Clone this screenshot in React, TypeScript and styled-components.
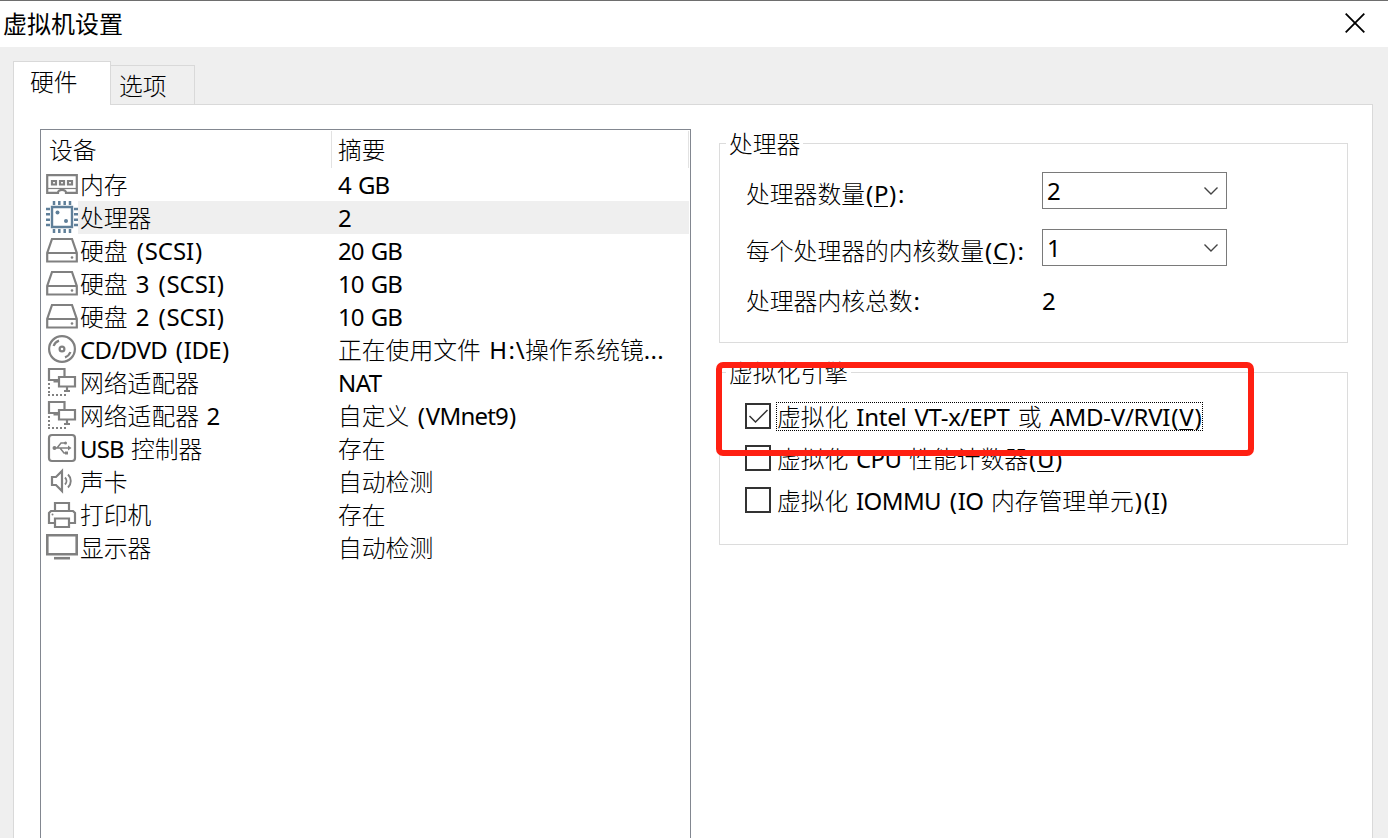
import React from "react";
import styled, { createGlobalStyle } from "styled-components";

const GlobalStyle = createGlobalStyle`
  *, *::before, *::after { box-sizing: border-box; }
  body { margin: 0; overflow: hidden; }
`;

const Dialog = styled.div`
  position: relative;
  display: flex;
  flex-direction: column;
  width: 1388px;
  height: 838px;
  overflow: hidden;
  background: #efefef;
  border-top: 1px solid #6e6e6e;
  color: #000;
  font: 24px/33px "Noto Sans", "Noto Sans CJK SC", sans-serif;
`;

const TitleBar = styled.header`
  display: flex;
  justify-content: space-between;
  align-items: center;
  flex: none;
  height: 46px;
  padding: 0 23px 2px 3px;
  background: #fff;
`;

const Title = styled.h1`
  margin: 0;
  padding-bottom: 1px;
  font: 400 24px/43px "Noto Sans CJK SC", sans-serif;
`;

const CloseButton = styled.button`
  display: flex;
  padding: 0;
  border: 0;
  background: none;
`;

const Tabs = styled.nav`
  position: relative;
  z-index: 1;
  display: flex;
  align-items: flex-end;
  flex: none;
  height: 57px;
  padding-left: 13px;
`;

const Tab = styled.button<{ $active?: boolean }>`
  display: flex;
  align-items: flex-start;
  flex: none;
  width: ${(p) => (p.$active ? 98 : 84)}px;
  height: ${(p) => (p.$active ? 44 : 39)}px;
  margin-bottom: ${(p) => (p.$active ? -1 : 0)}px;
  padding: ${(p) => (p.$active ? "3px 0 0 16px" : "3px 0 0 8px")};
  border: 1px solid #d9d9d9;
  border-bottom: 0;
  border-left-width: ${(p) => (p.$active ? 1 : 0)}px;
  background: ${(p) => (p.$active ? "#fff" : "#efefef")};
  color: inherit;
  font: inherit;
  text-align: left;
`;

const Panel = styled.main`
  display: flex;
  align-items: flex-start;
  gap: 28px;
  width: 1360px;
  height: 740px;
  margin-left: 13px;
  padding: 24px 24px 0 26px;
  background: #fff;
  border: 1px solid #d9d9d9;
`;

const DeviceList = styled.section`
  flex: none;
  width: 651px;
  height: 720px;
  border: 1px solid #828790;
  padding: 1px 1px 0 0;
`;

const ListHeader = styled.div`
  display: grid;
  grid-template-columns: 291px 1fr;
  height: 37px;
`;

const HeaderCell = styled.div<{ $indent: number }>`
  padding: 2px 0 0 ${(p) => p.$indent}px;
  border-right: 1px solid #e2e2e2;
`;

const DeviceRow = styled.div`
  display: grid;
  grid-template-columns: 32px 260px 1fr;
  height: 33px;
  padding-left: 5px;
`;

const Cell = styled.div<{ $selected?: boolean; $pad?: number }>`
  padding-left: ${(p) => p.$pad ?? 0}px;
  background: ${(p) => (p.$selected ? "#efefef" : "transparent")};
  white-space: nowrap;
`;

const Icon = styled.svg`
  display: block;
  width: 32px;
  height: 33px;
  fill: none;
  stroke: #808080;
  stroke-width: 2.2;
`;

const Latin = styled.span<{ $track: number }>`
  letter-spacing: ${(p) => p.$track}px;
  word-spacing: 2px;
  white-space: pre;
`;

const Punctuation = styled.span`
  padding-left: 1px;
  letter-spacing: 0.8px;
`;

const Cjk = styled.span`
  font-family: "Noto Sans CJK SC", sans-serif;
  font-size: 23.8px;
  font-weight: 300;
  line-height: 1;
`;

const Mnemonic = styled.u`
  text-decoration-thickness: 1px;
  text-underline-offset: 3px;
`;

const Settings = styled.div`
  display: flex;
  flex-direction: column;
  gap: 29px;
  width: 629px;
  padding-top: 14px;
`;

const Group = styled.section<{ $height: number }>`
  height: ${(p) => p.$height}px;
  padding-left: 6px;
  border: 1px solid #dcdcdc;
`;

const Legend = styled.h2`
  width: max-content;
  height: 33px;
  margin: -17px 0 0;
  padding: 0 3px;
  background: #fff;
  font: inherit;
`;

const Field = styled.div<{ $top: number }>`
  display: grid;
  grid-template-columns: 296px 185px;
  align-items: center;
  height: 37px;
  margin: ${(p) => p.$top}px 0 0 20px;
  white-space: nowrap;
`;

const FieldLabel = styled.label`
  padding-top: 7px;
`;

const Select = styled.button`
  display: flex;
  align-items: center;
  justify-content: space-between;
  width: 185px;
  height: 37px;
  padding: 0 8px 0 4px;
  border: 1px solid #7a7a7a;
  background: #fff;
  color: inherit;
  font: inherit;
`;

const Total = styled.output`
  padding: 7px 0 0;
`;

const Options = styled.div`
  display: flex;
  flex-direction: column;
  gap: 12px;
  padding: 12px 0 0 19px;
`;

const Option = styled.label`
  display: flex;
  align-items: center;
  gap: 5px;
  height: 30px;
`;

const Box = styled.span`
  display: flex;
  flex: none;
  width: 26px;
  height: 26px;
  border: 2px solid #333;
  background: #fff;
`;

const OptionText = styled.span<{ $focused?: boolean }>`
  height: 29px;
  margin-top: 1px;
  line-height: 28px;
  border: 1px dotted ${(p) => (p.$focused ? "#000" : "transparent")};
  white-space: nowrap;
`;

const Highlight = styled.div`
  position: absolute;
  left: 716px;
  top: 361px;
  width: 538px;
  height: 94px;
  border: 6px solid #ff2012;
  border-radius: 7px;
  pointer-events: none;
`;

/* Splits a label into Chinese, Latin and punctuation runs, and underlines the letter after "&". */
function Label({ text, track = -0.6 }: { text: string; track?: number }) {
  const runs = text.match(/[\u4e00-\u9fff]+|&[A-Z]|[():]|[^\u4e00-\u9fff&():]+/g) ?? [];
  return (
    <>
      {runs.map((run, i) => {
        if (/[\u4e00-\u9fff]/.test(run)) return <Cjk key={i}>{run}</Cjk>;
        if (/[():]/.test(run)) return <Punctuation key={i}>{run}</Punctuation>;
        return (
          <Latin key={i} $track={track}>
            {run[0] === "&" ? <Mnemonic>{run[1]}</Mnemonic> : run}
          </Latin>
        );
      })}
    </>
  );
}

const MemoryIcon = () => (
  <Icon viewBox="0 0 32 33">
    <path d="M1.200 7.200h29.600v17.600H20a4 3 0 0 0-8 0H1.200z" />
    <path d="M1 20.500h30" strokeWidth="1.200" />
    <path d="M6 13h4v3.500H6zM14 13h4v3.500h-4zM22 13h4v3.500h-4z" />
  </Icon>
);

const CpuIcon = () => (
  <Icon viewBox="0 0 32 33">
    <g stroke="#5f7f99">
      <path d="M6 6h20v20H6z" strokeWidth="2.400" />
      <path d="M8 0v4M13.300 0v4M18.700 0v4M24 0v4M8 28v4M13.300 28v4M18.700 28v4M24 28v4M0 8h4M0 13.300h4M0 18.700h4M0 24h4M28 8h4M28 13.300h4M28 18.700h4M28 24h4" strokeWidth="2.500" />
      <circle cx="11.500" cy="11.500" r="2" fill="#5f7f99" stroke="none" />
      <circle cx="20" cy="20" r="2" fill="#5f7f99" stroke="none" />
    </g>
  </Icon>
);

const DiskIcon = () => (
  <Icon viewBox="0 0 32 33">
    <path d="M6 5h20l4.800 14v8.500H1.200V19zM1 19h30" />
    <circle cx="26" cy="23.500" r="1.300" fill="#808080" stroke="none" />
  </Icon>
);

const DiscIcon = () => (
  <Icon viewBox="0 0 32 33">
    <circle cx="16" cy="16" r="12.900" />
    <circle cx="16" cy="16" r="2.400" />
    <path d="M7.600 13a9 9 0 0 1 5.400-5.400M24.400 19a9 9 0 0 1-5.400 5.400" />
  </Icon>
);

const NetworkIcon = () => (
  <Icon viewBox="0 0 32 33">
    <path d="M12 14H3V3h15.500v7M7.500 15.500H12" />
    <path d="M13 11h16v9.500H13zM21 20.500v4M18 25h6" />
    <path d="M3 17v12M2 29h18" strokeWidth="2" strokeDasharray="2 2" />
  </Icon>
);

const UsbIcon = () => (
  <Icon viewBox="0 0 32 33">
    <rect x="3" y="3" width="26" height="26" rx="3" />
    <path d="M8 16h15M11 16l4-5h4M14 16l4 5h3" strokeWidth="1.500" />
    <g fill="#808080" stroke="none">
      <circle cx="8.500" cy="16" r="2" />
      <path d="M22 13.500l3.500 2.500-3.500 2.500z" />
      <circle cx="19.500" cy="11" r="1.500" />
      <path d="M19 19.500h3v3h-3z" />
    </g>
  </Icon>
);

const SoundIcon = () => (
  <Icon viewBox="0 0 32 33">
    <path d="M6 12h4l6-6v20l-6-6H6z" />
    <path d="M19 12.500a5 5 0 0 1 0 7M22 9.500a9 9 0 0 1 0 13" strokeWidth="1.900" />
  </Icon>
);

const PrinterIcon = () => (
  <Icon viewBox="0 0 32 33">
    <path d="M9 13V5h14v8M8 25H3V15l2-2h22l2 2v10h-5" />
    <path d="M9 20.500h14V29H9z" />
    <circle cx="6.500" cy="16.500" r="1" fill="#808080" stroke="none" />
  </Icon>
);

const MonitorIcon = () => (
  <Icon viewBox="0 0 32 33">
    <path d="M1.300 4.300h29.400v18.900H1.300z" strokeWidth="2.600" />
    <path d="M8 27.200h16" strokeWidth="2.600" />
  </Icon>
);

const devices = [
  { icon: MemoryIcon, name: "内存", summary: "4 GB", summaryTrack: -1 },
  { icon: CpuIcon, name: "处理器", summary: "2", selected: true },
  { icon: DiskIcon, name: "硬盘 (SCSI)", nameTrack: -0.1, summary: "20 GB", summaryTrack: -1 },
  { icon: DiskIcon, name: "硬盘 3 (SCSI)", nameTrack: -0.1, summary: "10 GB", summaryTrack: -1 },
  { icon: DiskIcon, name: "硬盘 2 (SCSI)", nameTrack: -0.1, summary: "10 GB", summaryTrack: -1 },
  { icon: DiscIcon, name: "CD/DVD (IDE)", nameTrack: -0.6, summary: "正在使用文件 H:\\操作系统镜...", summaryTrack: 0.3 },
  { icon: NetworkIcon, name: "网络适配器", summary: "NAT" },
  { icon: NetworkIcon, name: "网络适配器 2", summary: "自定义 (VMnet9)", summaryTrack: -0.8 },
  { icon: UsbIcon, name: "USB 控制器", nameTrack: -0.9, summary: "存在" },
  { icon: SoundIcon, name: "声卡", summary: "自动检测" },
  { icon: PrinterIcon, name: "打印机", summary: "存在" },
  { icon: MonitorIcon, name: "显示器", summary: "自动检测" },
];

const Chevron = () => (
  <svg width="14" height="9" viewBox="0 0 14 9" fill="none" stroke="#444" strokeWidth="1.400">
    <path d="M.5 1.500L7 8 13.500 1.500" />
  </svg>
);

export default function App() {
  return (
    <>
      <GlobalStyle />
      <Dialog>
        <TitleBar>
          <Title>虚拟机设置</Title>
          <CloseButton aria-label="关闭">
            <svg width="20" height="20" viewBox="0 0 20 20" stroke="#000" strokeWidth="1.800">
              <path d="M.7.700l18.600 18.600M19.300.700L.7 19.300" />
            </svg>
          </CloseButton>
        </TitleBar>
        <Tabs>
          <Tab $active><span><Label text="硬件" /></span></Tab>
          <Tab><span><Label text="选项" /></span></Tab>
        </Tabs>
        <Panel>
          <DeviceList>
            <ListHeader>
              <HeaderCell $indent={8}><Label text="设备" /></HeaderCell>
              <HeaderCell $indent={6}><Label text="摘要" /></HeaderCell>
            </ListHeader>
            {devices.map(({ icon: DeviceIcon, name, nameTrack, summary, summaryTrack, selected }) => (
              <DeviceRow key={name}>
                <DeviceIcon />
                <Cell $selected={selected} $pad={2}><Label text={name} track={nameTrack} /></Cell>
                <Cell $selected={selected}><Label text={summary} track={summaryTrack} /></Cell>
              </DeviceRow>
            ))}
          </DeviceList>
          <Settings>
            <Group $height={200}>
              <Legend><Label text="处理器" /></Legend>
              <Field $top={10}>
                <FieldLabel><Label text="处理器数量(&P):" /></FieldLabel>
                <Select>2<Chevron /></Select>
              </Field>
              <Field $top={20}>
                <FieldLabel><Label text="每个处理器的内核数量(&C):" /></FieldLabel>
                <Select>1<Chevron /></Select>
              </Field>
              <Field $top={13}>
                <FieldLabel><Label text="处理器内核总数:" /></FieldLabel>
                <Total>2</Total>
              </Field>
            </Group>
            <Group $height={173}>
              <Legend><Label text="虚拟化引擎" /></Legend>
              <Options>
                <Option>
                  <Box>
                    <svg width="22" height="22" viewBox="0 0 22 22" fill="none" stroke="#333" strokeWidth="1.500">
                      <path d="M2.500 11l6 6L20.500 5" />
                    </svg>
                  </Box>
                  <OptionText $focused><Label text="虚拟化 Intel VT-x/EPT 或 AMD-V/RVI(&V)" track={-0.26} /></OptionText>
                </Option>
                <Option>
                  <Box />
                  <OptionText><Label text="虚拟化 CPU 性能计数器(&U)" track={-0.6} /></OptionText>
                </Option>
                <Option>
                  <Box />
                  <OptionText><Label text="虚拟化 IOMMU (IO 内存管理单元)(&I)" track={-0.6} /></OptionText>
                </Option>
              </Options>
            </Group>
          </Settings>
        </Panel>
        <Highlight />
      </Dialog>
    </>
  );
}
